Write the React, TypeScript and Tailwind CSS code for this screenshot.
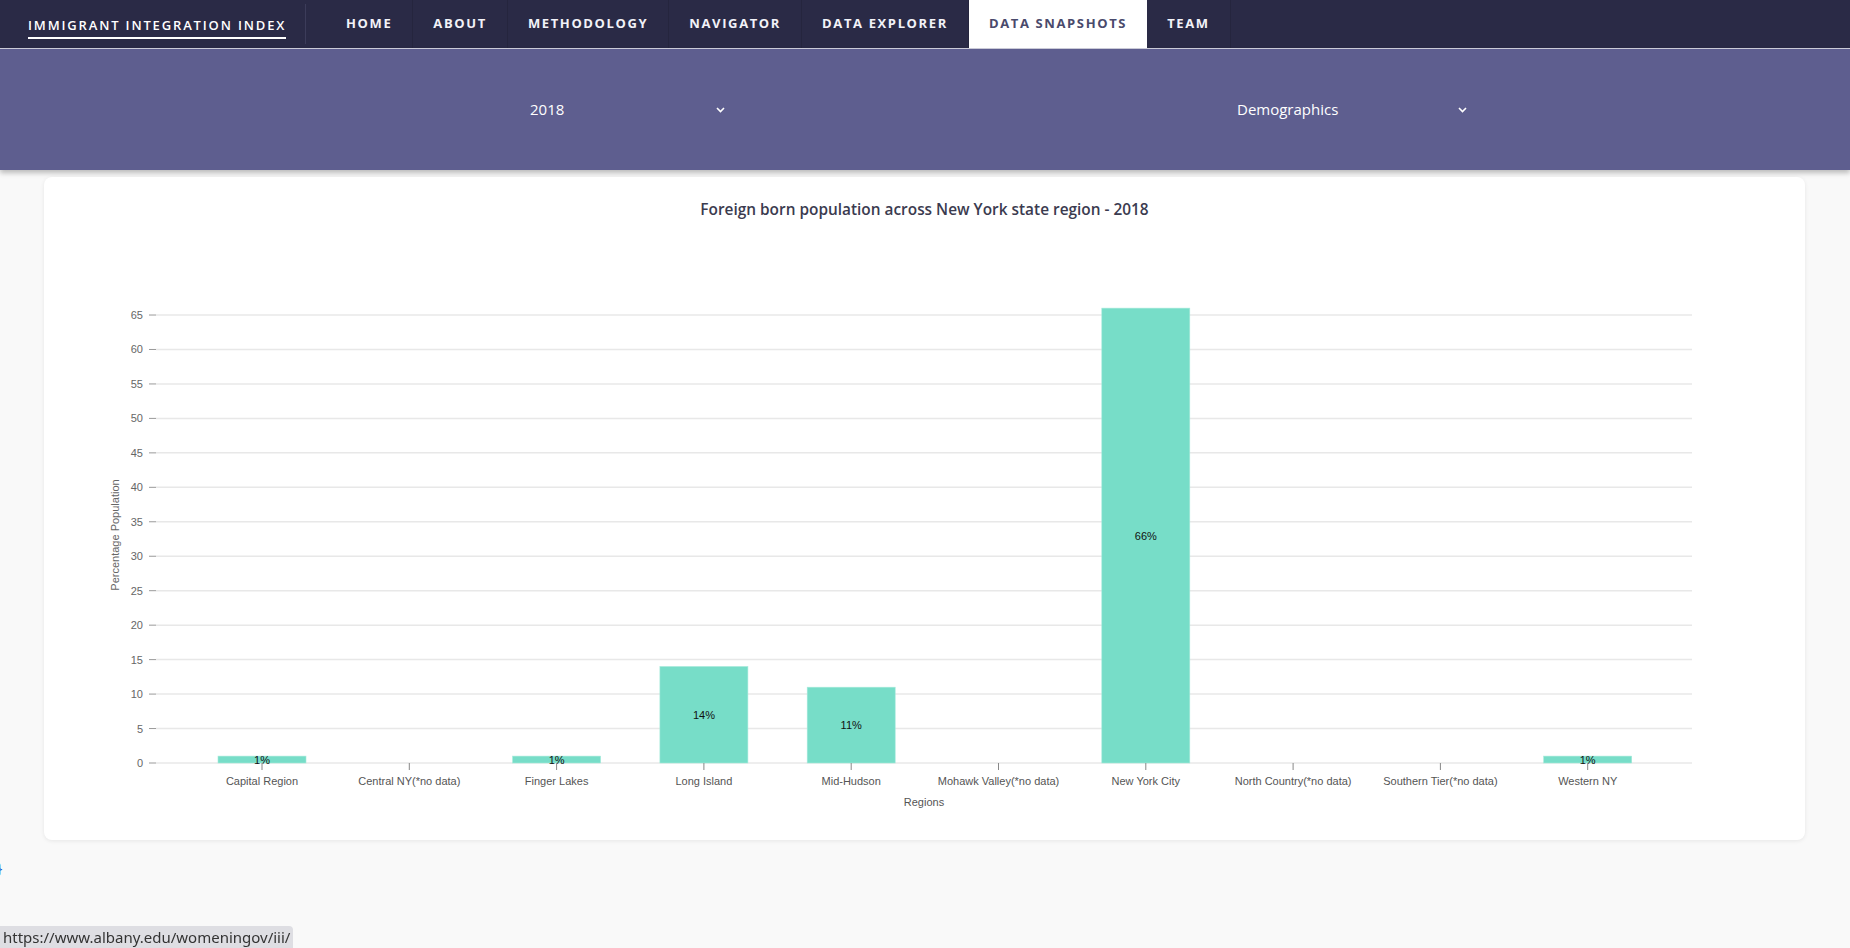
import React from "react";

const navItems = ["HOME", "ABOUT", "METHODOLOGY", "NAVIGATOR", "DATA EXPLORER", "DATA SNAPSHOTS", "TEAM"];

const data = [
  { name: "Capital Region", v: 1 },
  { name: "Central NY(*no data)", v: 0 },
  { name: "Finger Lakes", v: 1 },
  { name: "Long Island", v: 14 },
  { name: "Mid-Hudson", v: 11 },
  { name: "Mohawk Valley(*no data)", v: 0 },
  { name: "New York City", v: 66 },
  { name: "North Country(*no data)", v: 0 },
  { name: "Southern Tier(*no data)", v: 0 },
  { name: "Western NY", v: 1 },
];

// chart geometry in page coordinates
const Y0 = 763;
const UNIT = 6.892;
const X_LEFT = 156;
const X_RIGHT = 1692;
const FIRST = 262;
const STEP = 147.3;
const BAR_W = 88;

function Chevron() {
  return (
    <svg width="9" height="6" viewBox="0 0 9 6" className="shrink-0">
      <path d="M1 1 L4.5 4.5 L8 1" fill="none" stroke="#ffffff" strokeWidth="1.6" />
    </svg>
  );
}

function Chart() {
  const ticks = Array.from({ length: 14 }, (_, i) => i * 5);
  return (
    <svg width="1761" height="590" className="block" style={{ fontFamily: '"Liberation Sans", Arial, sans-serif' }}>
      <g transform="translate(-44,-232)">
        {ticks.map((t) => {
          const y = Y0 - t * UNIT;
          return (
            <g key={t}>
              <line x1={X_LEFT} x2={X_RIGHT} y1={y} y2={y} stroke="#e8e8e8" strokeWidth="1.5" />
              <line x1={149} x2={156} y1={y} y2={y} stroke="#999" strokeWidth="1" />
              <text x={143} y={y} textAnchor="end" dominantBaseline="central" fontSize="11" fill="#666">
                {t}
              </text>
            </g>
          );
        })}
        <text
          x={115}
          y={535}
          transform="rotate(-90 115 535)"
          textAnchor="middle"
          dominantBaseline="central"
          fontSize="11"
          fill="#666"
        >
          Percentage Population
        </text>
        {data.map((d, i) => {
          const cx = FIRST + i * STEP;
          const h = d.v * UNIT;
          return (
            <g key={d.name}>
              {d.v > 0 && (
                <rect x={cx - BAR_W / 2} y={Y0 - h} width={BAR_W} height={h} fill="#77ddc8" stroke="#a6eadb" strokeWidth="0.6" />
              )}
              {d.v > 0 && (
                <text x={cx} y={Y0 - h / 2} textAnchor="middle" dominantBaseline="central" fontSize="11" fill="#111">
                  {d.v}%
                </text>
              )}
              <line x1={cx} x2={cx} y1={Y0} y2={Y0 + 7} stroke="#888" strokeWidth="1" />
              <text x={cx} y={781} textAnchor="middle" dominantBaseline="central" fontSize="11" fill="#555">
                {d.name}
              </text>
            </g>
          );
        })}
        <text x={924} y={802} textAnchor="middle" dominantBaseline="central" fontSize="11" fill="#555">
          Regions
        </text>
      </g>
    </svg>
  );
}

export default function App() {
  return (
    <div className="min-h-[948px] bg-[#f9f9f9] font-['Open_Sans',sans-serif]">
      {/* top nav */}
      <div className="flex h-[49px] border-b border-[#cfcfdc] bg-[#2a2a46]">
        <div className="my-1 flex w-[306px] items-center border-r border-[#3c3c5a] pl-[28px]">
          <span className="border-b-2 border-white pb-[3px] pt-[6px] text-[13px] font-semibold leading-[18px] tracking-[0.142em] text-white">
            IMMIGRANT INTEGRATION INDEX
          </span>
        </div>
        <div className="ml-5 flex">
          {navItems.map((item) => {
            const active = item === "DATA SNAPSHOTS";
            return (
              <div
                key={item}
                className={
                  active
                    ? "flex items-center bg-white px-[20px] text-[13px] font-bold tracking-[0.125em] text-[#4a4a6c]"
                    : "flex items-center border-r border-[#25253e] px-[20px] text-[13px] font-bold tracking-[0.125em] text-[#f2f2f8]"
                }
              >
                {item}
              </div>
            );
          })}
        </div>
      </div>

      {/* filter band */}
      <div className="flex h-[121px] items-center bg-[#5e5e8f] shadow-[0_3px_5px_rgba(0,0,0,0.25)]">
        <div className="ml-[515px] flex w-[225px] items-center justify-between px-[15px] text-[15px] text-white">
          <span>2018</span>
          <Chevron />
        </div>
        <div className="ml-[482px] flex w-[260px] items-center justify-between px-[15px] text-[15px] text-white">
          <span>Demographics</span>
          <Chevron />
        </div>
      </div>

      {/* chart card */}
      <div className="mx-[44px] mt-[7px] w-[1761px] rounded-lg bg-white pt-[22px] pb-[18px] shadow-[0_1px_4px_rgba(0,0,0,0.08)]">
        <div className="text-center text-[15.4px] font-semibold leading-[22px] text-[#3b3b4f]">
          Foreign born population across New York state region - 2018
        </div>
        <div className="mt-[11px]">
          <Chart />
        </div>
      </div>

      <div className="mt-[18px] -ml-[3px] text-[14px] leading-[20px] text-[#1a66d6]">{"}"}</div>

      {/* browser status bubble */}
      <div className="fixed bottom-0 left-0 rounded-tr-[4px] bg-[#dedee3] px-[3px] font-['Noto_Sans',sans-serif] text-[15px] leading-[22px] text-[#333]">
        https://www.albany.edu/womeningov/iii/
      </div>
    </div>
  );
}
